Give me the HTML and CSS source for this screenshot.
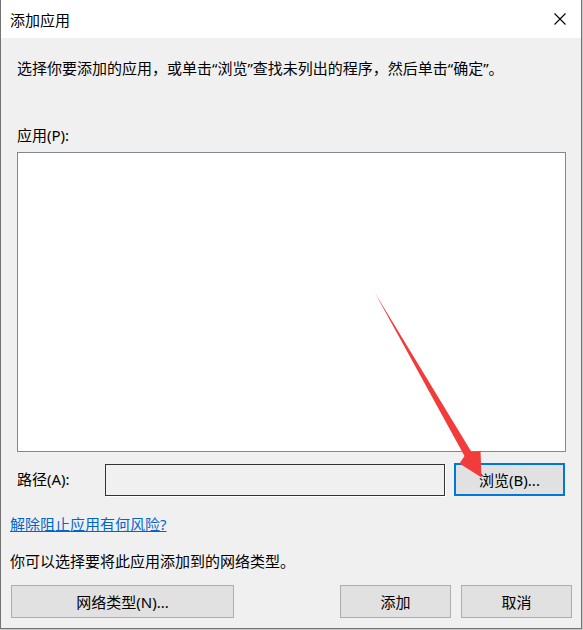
FILE: index.html
```html
<!DOCTYPE html>
<html lang="zh-CN">
<head>
<meta charset="utf-8">
<title>添加应用</title>
<link rel="stylesheet" href="styles.css">
</head>
<body>
<div class="window">
  <div class="titlebar">
    <span class="title">添加应用</span>
    <span class="close" aria-label="关闭">
      <svg width="12" height="12" viewBox="0 0 12 12"><path d="M0.5 0.5 L11.5 11.5 M11.5 0.5 L0.5 11.5" stroke="#000" stroke-width="1.1" fill="none"/></svg>
    </span>
  </div>
  <div class="instr">选择你要添加的应用，或单击“浏览”查找未列出的程序，然后单击“确定”。</div>
  <div class="label-apps">应用(P):</div>
  <div class="listbox"></div>
  <div class="path-row">
    <span class="path-label">路径(A):</span>
    <div class="path-input"></div>
    <button class="btn btn-browse">浏览(B)...</button>
  </div>
  <a class="link" href="#">解除阻止应用有何风险?</a>
  <div class="net-text">你可以选择要将此应用添加到的网络类型。</div>
  <div class="buttons">
    <button class="btn btn-net">网络类型(N)...</button>
    <button class="btn btn-add">添加</button>
    <button class="btn btn-cancel">取消</button>
  </div>
  <svg class="arrow" width="583" height="630" viewBox="0 0 583 630">
    <polygon points="375,293 471.5,452 480.5,451 481.5,477.5 459.5,463.5 464.5,456" fill="#f23c3c"/>
  </svg>
</div>
</body>
</html>
```
FILE: styles.css
```css
html, body {
  margin: 0;
  padding: 0;
}
body {
  background: #c8c8c8;
  width: 583px;
  height: 630px;
  overflow: hidden;
}
.window {
  position: relative;
  width: 582px;
  height: 629px;
  box-sizing: border-box;
  border-left: 1px solid #747474;
  border-right: 1px solid #747474;
  border-bottom: 1px solid #747474;
  background: #f0f0f0;
  display: flex;
  flex-direction: column;
  align-items: flex-start;
  font-family: "Noto Sans", "Noto Sans CJK SC", sans-serif;
  font-size: 15px;
  color: #000;
}
.titlebar {
  width: 100%;
  height: 38px;
  box-sizing: border-box;
  background: #fff;
  display: flex;
  align-items: center;
  justify-content: space-between;
  padding-left: 9px;
  padding-top: 2px;
}
.title {
  line-height: 20px;
}
.close {
  width: 42px;
  height: 36px;
  display: flex;
  align-items: center;
  justify-content: center;
  margin-top: -2px;
}
.instr {
  margin: 20px 0 0 16px;
  line-height: 20px;
  white-space: nowrap;
}
.label-apps {
  margin: 47px 0 0 16px;
  line-height: 20px;
}
.listbox {
  margin: 7px 0 0 16px;
  width: 549px;
  height: 300px;
  box-sizing: border-box;
  border: 1px solid #828790;
  background: #fff;
}
.path-row {
  margin: 11px 0 0 16px;
  height: 33px;
  display: flex;
  align-items: flex-start;
}
.path-label {
  width: 88px;
  line-height: 20px;
  margin-top: 6px;
}
.path-input {
  width: 340px;
  height: 32px;
  margin-top: 1px;
  box-sizing: border-box;
  border: 1px solid #333;
  box-shadow: 1px 1px 0 #fff;
  background: #f0f0f0;
}
.btn {
  font: inherit;
  color: #000;
  background: #e1e1e1;
  border: 1px solid #adadad;
  height: 33px;
  padding: 0;
  margin: 0;
  box-sizing: border-box;
  line-height: 20px;
}
.btn-browse {
  width: 111px;
  margin-left: 9px;
  border: 2px solid #0078d7;
}
.link {
  margin: 18px 0 0 9px;
  line-height: 20px;
  color: #0066cc;
  text-decoration: underline;
}
.net-text {
  margin: 17px 0 0 9px;
  line-height: 20px;
}
.buttons {
  margin: 14px 0 0 10px;
  display: flex;
}
.btn-net {
  width: 223px;
}
.btn-add {
  width: 111px;
  margin-left: 106px;
}
.btn-cancel {
  width: 111px;
  margin-left: 10px;
}
.arrow {
  position: absolute;
  left: -1px;
  top: 0;
  pointer-events: none;
}
```
